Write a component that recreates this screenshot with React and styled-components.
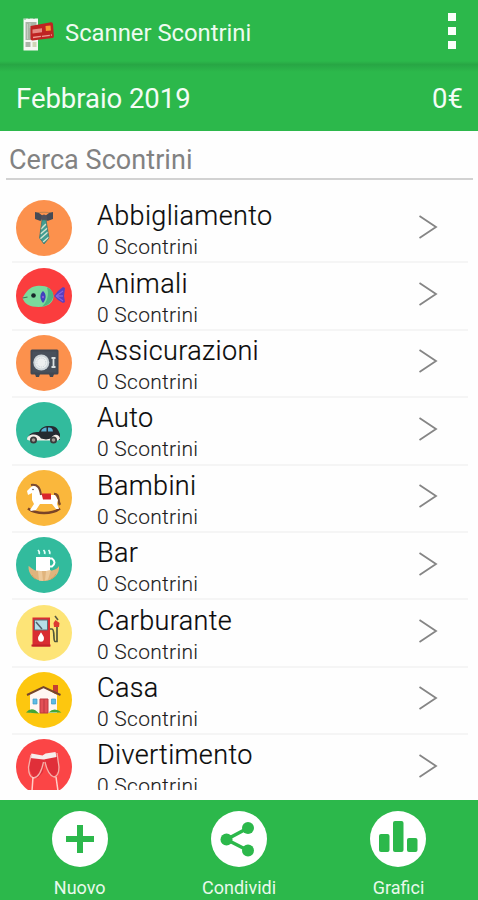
import React from "react";
import styled, { createGlobalStyle } from "styled-components";

const GREEN = "#2cb84b";

const GlobalStyle = createGlobalStyle`
  * { box-sizing: border-box; }
  body { margin: 0; background: #fff; font-family: Roboto, "Liberation Sans", sans-serif; }
`;

const Screen = styled.div`
  width: 478px;
  height: 900px;
  display: flex;
  flex-direction: column;
  overflow: hidden;
  background: #fefefe;
`;

const AppBar = styled.header`
  height: 65px;
  flex: none;
  display: flex;
  align-items: center;
  padding: 0 20px 0 22px;
  background: linear-gradient(${GREEN} 61px, #27a443 65px);
  color: #eefbf0;
`;

const AppTitle = styled.h1`
  margin: 0 auto 0 8px;
  font-size: 23.8px;
  line-height: 28px;
  font-weight: 400;
`;

const MenuButton = styled.button`
  display: flex;
  flex-direction: column;
  gap: 5.6px;
  width: 12px;
  margin: 0 0 3px;
  padding: 0 2px;
  border: 0;
  background: none;
`;

const MenuDot = styled.span`
  height: 8px;
  width: 8px;
  background: #fafffa;
`;

const MonthBar = styled.section`
  height: 66px;
  flex: none;
  display: flex;
  align-items: center;
  justify-content: space-between;
  padding: 1px 15px 0 16px;
  background: linear-gradient(#28a745, ${GREEN} 7px);
  color: #f4fcf5;
  font-size: 27.5px;
  line-height: 34px;
`;

const MonthName = styled.span`
  letter-spacing: -0.04px;
`;

const Amount = styled.span`
  font-size: 27.5px;
`;

const SearchField = styled.input`
  display: block;
  flex: none;
  width: 467px;
  height: 49px;
  margin: 0 0 0 6px;
  padding: 10px 3px 0;
  border: 0;
  border-bottom: 2px solid #d2d2d2;
  outline: 0;
  background: transparent;
  font: 400 27px Roboto, "Liberation Sans", sans-serif;
  letter-spacing: 0.05px;
  &::placeholder { color: #828282; opacity: 1; }
`;

const List = styled.ul`
  list-style: none;
  flex: none;
  height: 594px;
  margin: 16px 10px 10px 12px;
  padding: 0;
  overflow: hidden;
`;

const Row = styled.li`
  height: 67.4px;
  display: flex;
  align-items: center;
  padding: 0 30px 0 4px;
  border-bottom: 2px solid #f5f5f5;
`;

const Badge = styled.span`
  flex: none;
  width: 56px;
  height: 56px;
  margin-bottom: 1px;
  border-radius: 50%;
  overflow: hidden;
  background: ${(p) => p.$color};
  svg { display: block; }
`;

const RowText = styled.div`
  flex: 1;
  padding: 6px 0 0 25px;
`;

const Name = styled.div`
  font-size: 27px;
  line-height: 32px;
  font-weight: 300;
  color: #0a0a0a;
  letter-spacing: 0.36px;
  -webkit-text-stroke: 0.2px #0a0a0a;
`;

const Count = styled.div`
  font-size: 21px;
  line-height: 31px;
  font-weight: 300;
  color: #1c1c1c;
  letter-spacing: 0.28px;
  -webkit-text-stroke: 0.1px #1c1c1c;
`;

const Footer = styled.nav`
  height: 100px;
  flex: none;
  display: grid;
  grid-template-columns: repeat(3, 159.4px);
  background: ${GREEN};
`;

const Action = styled.button`
  display: flex;
  flex-direction: column;
  align-items: center;
  gap: 10px;
  margin: 0;
  padding: 11px 0 0;
  border: 0;
  background: none;
  color: #e9f9eb;
  font: 400 18px/22px Roboto, "Liberation Sans", sans-serif;
`;

const ActionDisc = styled.span`
  width: 56px;
  height: 56px;
  border-radius: 50%;
  background: #fff;
  svg { display: block; }
`;

const ChevronIcon = styled.svg`
  display: block;
  margin-bottom: 4px;
`;

const Icon = ({ children }) => (
  <svg width="56" height="56" viewBox="0 0 56 56" fill="none">{children}</svg>
);

const Logo = () => (
  <svg width="35" height="40" viewBox="0 0 35 40">
    <path d="M1.500 5.500h14.500v32H1.500z" fill="#f5f7f3" />
    <path d="M3.500 9h11v18h-11z" fill="#a9b5a6" />
    <path d="M5.500 11v15M8 10v5" stroke="#c5cdc2" />
    <path d="M3.500 29h5v5h-5z" fill="#aab4a8" />
    <path d="M10.500 29h4v5h-4z" fill="#d0d5b7" />
    <path d="M2 6h2M6 5.500h2M11 5.500h2" stroke="#77b780" />
    <path d="M8.500 13 29 9.300a2 2 0 0 1 2 2l.9 12a1.500 1.500 0 0 1-1.500 1.600L10.500 27.500a2 2 0 0 1-2-2z" fill="#bf2322" />
    <path d="M10.500 16.500 20 15.300v4l-9.500 1.200z" fill="#e68982" />
    <path d="m23.500 13 5-.5.400 5-5 .6z" fill="#f59a32" />
    <path d="m11 24.500 19-2.500" stroke="#ee9c93" strokeWidth="1.300" strokeDasharray="8 1" />
  </svg>
);

const Tie = () => (
  <Icon>
    <path d="M20 13c4-1 12-1 16 0" stroke="#b8804f" strokeWidth="1" />
    <path d="m19 12 4 1 4.500 3.500-3 4.500-5.500-2z" fill="#454a55" />
    <path d="m37 12-4 1-4.500 3.500 3 4.500 5.500-2z" fill="#454a55" />
    <path d="m25.500 15.500 2.500-1 2.500 1 .8 3-1 3h-4l-1.300-3z" fill="#51515b" />
    <path d="M26 20h4l3 18-5 6-4.500-6z" fill="#429d91" />
    <path d="m25 29 5-5M24.500 34l7-6M24 39l8-7M27 42l6-5" stroke="#d4e3d2" strokeWidth="1.500" />
    <path d="M26 20h4l3 18-5 6-4.500-6z" stroke="#39706b" strokeWidth=".7" />
  </Icon>
);

const Fish = () => (
  <Icon>
    <path d="m38 28 4-5 5-4 2 1-1 8 1 6-2 1-5-3z" fill="#5a3fc0" />
    <path d="m40 28 7-5m-7 5 7 5M41 28h6" stroke="#8762dc" strokeWidth="1.300" />
    <path d="M6.500 30c4-7 7-11 14-12 9-1 16 2 17 10 0 7-6 11-15 11-9 0-14-3-16-9z" fill="#7bda9c" />
    <path d="M31 19.500c10 4 8 16-5 19.300 6-6 7-13 5-19.300z" fill="#4db583" />
    <path d="M27 23c3.500 3 3.500 8 0 12-3.500-4-3.500-9 0-12z" fill="#4042bc" />
    <circle cx="27" cy="29" r="1.200" fill="#8c5ad8" />
    <circle cx="17.500" cy="27.500" r="2.300" fill="#17272b" />
    <path d="m6.500 30 5-1" stroke="#477258" strokeWidth="1.200" />
  </Icon>
);

const Safe = () => (
  <Icon>
    <rect x="14.500" y="14.500" width="28" height="25" rx="1.500" fill="#424852" />
    <path d="M19 39h5l-1 3h-3zm14 0h5l-1 3h-3z" fill="#424852" />
    <rect x="16.500" y="16.500" width="24" height="21" fill="#48505b" />
    <circle cx="25.300" cy="27.500" r="8" fill="#ccd4d8" />
    <circle cx="25.300" cy="27.500" r="6" fill="#edf0f0" />
    <circle cx="25.300" cy="27.500" r="4.500" stroke="#c0cad0" strokeDasharray="1 1" />
    <path d="M35.500 23h4m-4 9h4M37.500 22.500v10" stroke="#dce1e2" strokeWidth="1.800" />
  </Icon>
);

const Car = () => (
  <Icon>
    <path d="M12 35c2-4 5-5 11-5 2-5 6-6.500 12-6 6 0 7 4 9 8v6H12z" fill="#252a31" />
    <path d="M25 29.500c1-3 3-4 5.500-4v4zm7-4c4 0 4.500 1 5 4h-5z" fill="#57afd3" />
    <path d="M11 37.500c0-6 11-7 14-1l5 1 5-1c2-5 8-5 9 0l-2 2H13z" fill="#f4eee8" />
    <circle cx="17.500" cy="38" r="3.500" fill="#3a3b3c" /><circle cx="17.500" cy="38" r="1.800" fill="#a09a92" />
    <circle cx="37.500" cy="38" r="3.500" fill="#3a3b3c" /><circle cx="37.500" cy="38" r="1.800" fill="#a09a92" />
  </Icon>
);

const Horse = () => (
  <Icon>
    <path d="M12 38.500c8 6 24 6 32 0" stroke="#794327" strokeWidth="2.500" />
    <path d="M38 24c6 0 3 6 6 11" stroke="#7d4b2b" strokeWidth="2.500" />
    <path d="m11 21 4-4 4-2 5 4 2 6h13l3 5-1 4 2 5h-3l-4-5H24l-4 6-5 1-1-1 4-6-2-4v-7l-4 2z" fill="#fff" />
    <path d="M15 15c7-1 9 3 10 10" stroke="#7a4a30" strokeWidth="2" />
    <path d="M25.500 23.500h9.500v6h-8z" fill="#d9252d" />
    <circle cx="17" cy="19.500" r=".8" fill="#574b43" />
  </Icon>
);

const Coffee = () => (
  <Icon>
    <path d="M22 13q2 2 1 4m4.500-4q2 2 1 4m4-4q2 2 1 4" stroke="#e7fff9" strokeWidth="1.700" />
    <path d="M20 20h14v15H20z" fill="#fff" />
    <path d="M33 21.500h3q5 4 0 8h-3" stroke="#fff" strokeWidth="2" />
    <path d="M12.500 29c4 2 4 5 12.500 5s15 0 18-5c1 8-6 15-15 15-10 0-16-7-15.500-15z" fill="#e0b47d" />
    <path d="m22 34 4 0 1 10-4-.5zm8 0 5-1-3 9.500-3 1z" fill="#edc99a" />
    <path d="M16 38q1 3 4 4M40 37q-2 4-5 5" stroke="#cf9f63" />
  </Icon>
);

const Pump = () => (
  <Icon>
    <path d="M16.500 12.500h17.500v29H16.500z" fill="#d92d32" />
    <path d="M15.500 40.500h19" stroke="#c22228" strokeWidth="2" />
    <path d="M18.500 15h13v10h-13z" fill="#b6dfe9" stroke="#5e6e76" />
    <path d="m20 17 6 7" stroke="#52616c" strokeWidth="1.500" />
    <path d="M25 29c7 9-7 9 0 0z" fill="#fff" stroke="#fff" strokeWidth="2" />
    <path d="M34 24h2c3 0 1 12 3 12.500h2V21" stroke="#52573b" strokeWidth="1.700" />
    <path d="m37.500 18 2-3 4 3-.5 4h-5z" fill="#dc3932" />
    <path d="m39 11 3 4" stroke="#5b5940" strokeWidth="1.500" />
  </Icon>
);

const House = () => (
  <Icon>
    <path d="M37 13h5v9h-5z" fill="#c43f30" />
    <path d="m14 22 13-7 14 8v18H14z" fill="#fff6f2" />
    <path d="m11 23 16.500-8 17 8" stroke="#75452d" strokeWidth="2" />
    <path d="M24 27h8v14h-8z" fill="#e34f55" stroke="#bd3b40" />
    <path d="M28 27v14" stroke="#b93940" />
    <path d="M17 27h4v5h-4zm18.500 0h4v5h-4z" fill="#5ebbe5" stroke="#3a9bc7" strokeWidth=".7" />
    <path d="M10 40.500q6-7 13 1zm22.500 0q6-6 13 0z" fill="#43a637" />
  </Icon>
);

const Glasses = () => (
  <Icon>
    <path d="m15 18 14 2-2 13-5 6-5-1-4-8zm26-1-13 3 5 15 5 3 5-7z" fill="#e02f39" />
    <path d="m15.500 14.500 11 2 3-2 10-1.500 1 5-13 2.500-13.500-1.500z" fill="#f6eeeb" />
    <path d="m15 16-2.500 12q0 10 5 11 7-1 10-16M41 14l2 14q0 9-5 10-6-2-9-15" stroke="#f5afa9" strokeWidth="1.300" />
    <path d="m17 38-1 14M40 38l2 14" stroke="#ffcfc8" strokeWidth="1.500" />
  </Icon>
);

const Chevron = () => (
  <ChevronIcon width="20" height="26" viewBox="0 0 20 26" fill="none">
    <path d="m1.500 2 16.500 11-16.500 11" stroke="#858585" strokeWidth="1.800" />
  </ChevronIcon>
);

const categories = [
  ["Abbigliamento", "#fc914d", Tie],
  ["Animali", "#fb3d3e", Fish],
  ["Assicurazioni", "#fc914d", Safe],
  ["Auto", "#32bb9d", Car],
  ["Bambini", "#fab73c", Horse],
  ["Bar", "#32bb9d", Coffee],
  ["Carburante", "#fde477", Pump],
  ["Casa", "#fdc70f", House],
  ["Divertimento", "#fb4546", Glasses],
];

const PlusIcon = () => (
  <Icon><path d="M28 14v28M14 28h28" stroke={GREEN} strokeWidth="6" /></Icon>
);

const ShareIcon = () => (
  <Icon>
    <path d="M37 17 15.500 28.500 37 39.500" stroke={GREEN} strokeWidth="3.500" />
    <circle cx="37" cy="17" r="6" fill={GREEN} />
    <circle cx="15.500" cy="28.500" r="6" fill={GREEN} />
    <circle cx="37" cy="39.500" r="6" fill={GREEN} />
  </Icon>
);

const ChartIcon = () => (
  <Icon>
    <rect x="9" y="23" width="10.500" height="18" rx="2" fill={GREEN} />
    <rect x="23" y="10" width="10.500" height="31" rx="2" fill={GREEN} />
    <rect x="37" y="27" width="10.500" height="14" rx="2" fill={GREEN} />
  </Icon>
);

const actions = [
  ["Nuovo", PlusIcon],
  ["Condividi", ShareIcon],
  ["Grafici", ChartIcon],
];

export default function App() {
  return (
    <Screen>
      <GlobalStyle />
      <AppBar>
        <Logo />
        <AppTitle>Scanner Scontrini</AppTitle>
        <MenuButton aria-label="Menu">
          <MenuDot /><MenuDot /><MenuDot />
        </MenuButton>
      </AppBar>
      <MonthBar>
        <MonthName>Febbraio 2019</MonthName>
        <Amount>0€</Amount>
      </MonthBar>
      <SearchField placeholder="Cerca Scontrini" />
      <List>
        {categories.map(([name, color, Picture]) => (
          <Row key={name}>
            <Badge $color={color}><Picture /></Badge>
            <RowText>
              <Name>{name}</Name>
              <Count>0 Scontrini</Count>
            </RowText>
            <Chevron />
          </Row>
        ))}
      </List>
      <Footer>
        {actions.map(([label, Picture]) => (
          <Action key={label}>
            <ActionDisc><Picture /></ActionDisc>
            {label}
          </Action>
        ))}
      </Footer>
    </Screen>
  );
}
